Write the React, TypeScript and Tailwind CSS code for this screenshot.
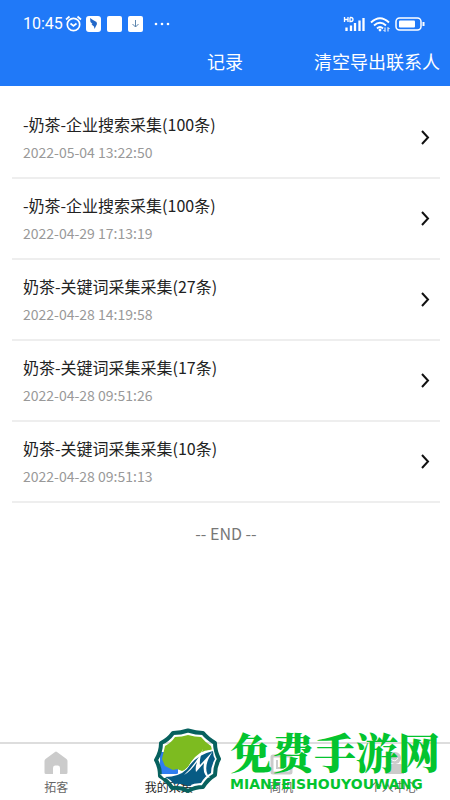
import type { ReactNode } from "react";

type RecordItem = { title: string; time: string };
type Tab = { label: string; icon: ReactNode; active?: boolean };

const records: RecordItem[] = [
  { title: "-奶茶-企业搜索采集(100条)", time: "2022-05-04 13:22:50" },
  { title: "-奶茶-企业搜索采集(100条)", time: "2022-04-29 17:13:19" },
  { title: "奶茶-关键词采集采集(27条)", time: "2022-04-28 14:19:58" },
  { title: "奶茶-关键词采集采集(17条)", time: "2022-04-28 09:51:26" },
  { title: "奶茶-关键词采集采集(10条)", time: "2022-04-28 09:51:13" },
];

const tabs: Tab[] = [
  {
    label: "拓客",
    icon: (
      <path d="M12 0.5 Q12.500 0.500 13 1 L22.500 8 Q23.500 9 23.500 10 V21.500 Q23.500 23 22 23 H16 V17 Q16 14.500 14 14.500 H11 Q9 14.500 9 17 V23 H2 Q0.500 23 0.500 21.500 V10 Q0.500 9 1.500 8 L11 1 Z" fill="#cbcbcb" />
    ),
  },
  {
    label: "我的采集",
    active: true,
    icon: <path d="M3 1 H21 V23 H5 Q3 23 3 21 Z" fill="#2f7df0" />,
  },
  {
    label: "商机",
    icon: (
      <g fill="none" stroke="#cbcbcb">
        <rect x="3" y="5" width="19" height="17" rx="1" strokeWidth="3" />
        <path d="M8 9 V17 H15 M16 8 V14" strokeWidth="2" />
      </g>
    ),
  },
  {
    label: "个人中心",
    icon: (
      <g fill="#cbcbcb">
        <circle cx="13" cy="7" r="6" />
        <path d="M4 23 V17 Q4 13 8 13 H18 Q22 13 22 17 V23 Z" />
        <path d="M9 8 Q13 12 16 7" fill="none" stroke="#fff" />
      </g>
    ),
  },
];

function StatusBar() {
  return (
    <div className="flex h-12 items-center justify-between pl-[23px] pr-[25px] font-[Roboto,sans-serif]">
      <div className="flex items-center">
        <span className="text-base">10:45</span>
        <svg className="ml-0.5" width="17" height="18" viewBox="0 0 17 18" fill="none" stroke="#fff" strokeWidth="1.7">
          <circle cx="8.5" cy="9.5" r="6.2" />
          <path d="M1 4.500 L4.500 1.500 M16 4.500 L12.500 1.500 M5.500 8.500 L8.500 11 L11.500 8.500" />
        </svg>
        <svg className="ml-1" width="58" height="16" viewBox="0 0 58 16">
          <rect width="15" height="16" rx="3" fill="#fff" />
          <path d="M4 2 L7 4 L10.500 6 L11 8 L8.500 13 L8 10.500 L5.500 8.500 L6.500 8 L4.500 6 Z" fill="#2468c8" />
          <rect x="21" width="15" height="16" rx="2" fill="#fff" />
          <rect x="42" width="15" height="16" rx="2" fill="#fff" />
          <path d="M49.500 4 V11 M46.500 8 L49.500 11 L52.500 8" stroke="#5d86ae" fill="none" />
        </svg>
        <svg className="ml-2.5" width="16" height="4" viewBox="0 0 16 4" fill="#fff">
          <circle cx="2" cy="2" r="1.300" />
          <circle cx="8" cy="2" r="1.300" />
          <circle cx="14" cy="2" r="1.300" />
        </svg>
      </div>
      <svg width="82" height="18" viewBox="0 0 82 18" fill="none" stroke="#fff">
        <path d="M1.500 2 V7 M5 2 V7 M1.500 4.500 H5 M7 2.500 V6.500 H8 Q10 6.500 10 4.500 Q10 2.500 8 2.500 H7" strokeWidth="1.300" />
        <path d="M3.500 12.500 V16 M8 10.500 V16 M12 8 V16 M16.500 5.500 V16 M20.500 3 V16" strokeWidth="2.300" />
        <path d="M28 7.500 Q37 -1 46 7.500 M31 10.500 Q37 5 43 10.500 M34 13.500 Q37 10.500 40 13.500" strokeWidth="1.900" />
        <circle cx="37" cy="15" r="1.400" fill="#fff" stroke="none" />
        <path d="M42 12.500 V16.500 M40.500 15 L42 16.500 M45 16.500 V12.500 L46.500 14" />
        <rect x="53" y="3" width="25" height="12" rx="3.500" strokeWidth="1.500" />
        <rect x="56" y="5.500" width="16" height="7" rx="1" fill="#fff" stroke="none" />
        <path d="M80.500 7 V11" strokeWidth="2" />
      </svg>
    </div>
  );
}

function RecordRow({ title, time }: RecordItem) {
  return (
    <li className="border-b-2 border-[#eeeeee]">
      <a href="#record" className="flex items-center justify-between pt-3 pb-3.5 pl-[11px] pr-2.5">
        <div>
          <div className="text-base leading-7 text-[#222222]">{title}</div>
          <div className="mt-1 text-sm leading-[21px] text-[#999999]">{time}</div>
        </div>
        <svg width="10" height="16" viewBox="0 0 10 16" fill="none" stroke="#111" strokeWidth="2">
          <path d="M2 2 L8 8.500 L2 15" />
        </svg>
      </a>
    </li>
  );
}

function Watermark() {
  return (
    <div className="pointer-events-none absolute bottom-1.5 left-[153px] flex items-center">
      <svg width="69" height="66" viewBox="0 0 69 66">
        <path d="M20 5 Q28 5 35 2.500 Q43 5 50 5 Q54 10 62 15 Q62 23 66 31 Q62 38 62 47 Q55 51 50 59 Q42 59 35 63 Q27 59 19 60 Q15 53 7 48 Q7 39 3 32 Q8 24 8 15 Q15 12 20 5 Z" fill="none" stroke="#07615e" strokeWidth="4" strokeLinejoin="round" />
        <path d="M22 9 Q29 9 35 7 Q42 9 48 9 Q52 14 58 18 L59 22 Q47 21 38 34 Q34 42 29 43 L24 41 L20 42 L12 38 L9 31 L12 18 Q18 15 22 9 Z" fill="#7dbb20" />
        <path d="M7 46 Q25 50 35 39 Q43 25 60 21 L61 24 Q46 27 37 41 Q27 51 11 50 Z" fill="#fff" />
        <path d="M12 49 Q26 49 34 41 Q43 27 60 23 Q60 28 62 31 Q58 38 58 45 Q52 48 48 55 Q41 55 35 58 Q28 55 21 56 Q17 51 12 49 Z" fill="#075b84" />
        <path d="M31 47 Q43 36 50 21 Q46 32 47 37 L60 23 Q51 36 54 45 Q55 49 57 50 Q49 48 51 35 L43 44 Q42 40 44 34 Q38 43 31 47 Z" fill="#fff" />
      </svg>
      <div className="ml-2 text-[#04c42f]">
        <div className="font-['Noto_Serif_CJK_SC','Noto_Sans_CJK_SC',serif] text-[42px] leading-[46px] font-black whitespace-nowrap">免费手游网</div>
        <div className="font-['DejaVu_Sans',sans-serif] text-sm leading-5 font-bold">MIANFEISHOUYOUWANG</div>
      </div>
    </div>
  );
}

export default function App() {
  return (
    <div className="relative flex min-h-screen flex-col bg-white font-['Noto_Sans_CJK_SC',sans-serif]">
      <header className="bg-[#2079f8] pb-3 text-white">
        <StatusBar />
        <div className="grid grid-cols-[1fr_auto_1fr] items-center px-2.5">
          <span />
          <h1 className="text-lg leading-[26px]">记录</h1>
          <button type="button" className="justify-self-end text-lg leading-[26px] whitespace-nowrap">清空导出联系人</button>
        </div>
      </header>
      <main className="flex-1 pt-3 pr-2.5 pl-3">
        <ul>
          {records.map((record) => (
            <RecordRow key={record.time} {...record} />
          ))}
        </ul>
        <p className="pt-[18px] text-center text-base leading-6 text-[#777777]">-- END --</p>
      </main>
      <nav className="grid grid-cols-4 border-t-2 border-[#dddddd] pt-[7px] pb-px">
        {tabs.map((tab) => (
          <a key={tab.label} href="#tab" className="flex flex-col items-center">
            <svg width="24" height="24" viewBox="0 0 24 24">{tab.icon}</svg>
            <span className={tab.active ? "text-xs leading-6 text-[#222222]" : "text-xs leading-6 text-[#666666]"}>{tab.label}</span>
          </a>
        ))}
      </nav>
      <Watermark />
    </div>
  );
}
